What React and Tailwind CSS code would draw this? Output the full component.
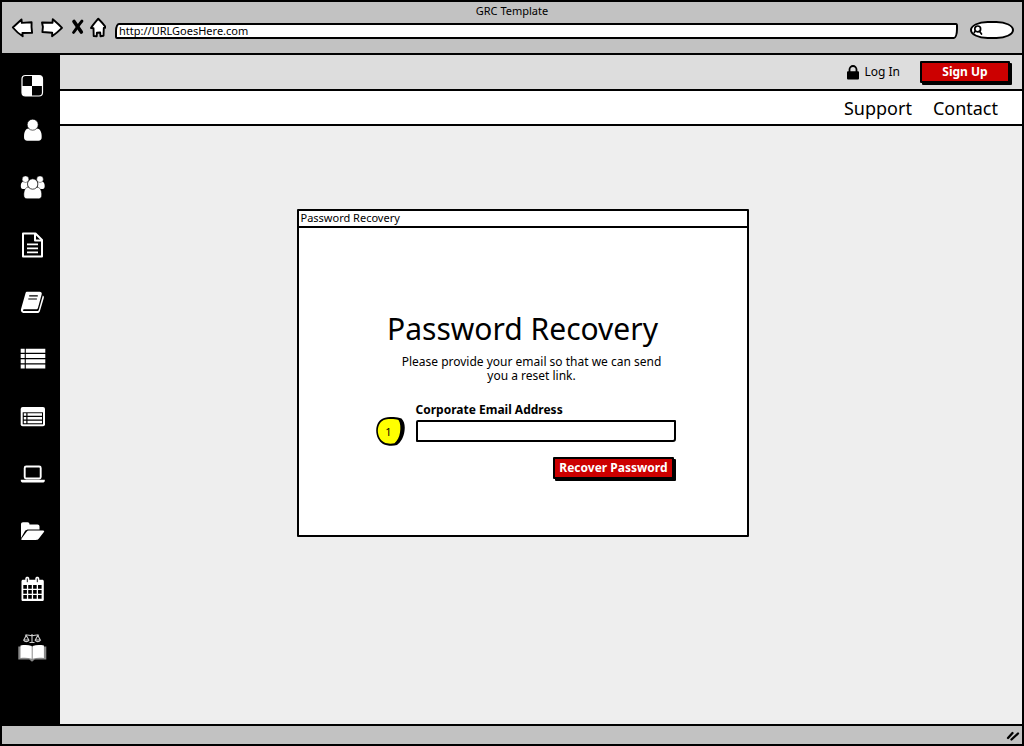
import React from "react";

function Icon({ children, label }) {
  return (
    <svg viewBox="0 0 32 32" className="h-8 w-8" role="img" aria-label={label} fill="white">
      {children}
    </svg>
  );
}

function CheckerIcon() {
  return (
    <Icon label="Dashboard">
      <rect x="6" y="5.500" width="20.500" height="20.500" rx="3.500" fill="black" stroke="white" strokeWidth="1.200" />
      <path d="M16 5.500h7a3.500 3.500 0 0 1 3.500 3.500v7H16zM6 16h10v10H9.500a3.500 3.500 0 0 1-3.500-3.500z" />
    </Icon>
  );
}

const menuIcons = [
  {
    label: "User",
    art: (
      <>
        <path d="M8 23c0-5.500 1.800-8.500 4.500-8.500h8.500c2.800 0 4.700 3 4.700 8.500 0 2.500-1.200 3.800-3.200 3.800H11.200C9.200 26.800 8 25.500 8 23z" />
        <circle cx="16.700" cy="10.700" r="5.500" stroke="black" strokeWidth="0.600" />
      </>
    ),
  },
  {
    label: "Group",
    art: (
      <>
        <path d="M4.800 14c0-3 1.200-4.500 3-4.500h4V17H6.800c-1.300 0-2-1-2-3zM28.700 14c0-3-1.200-4.500-3-4.500h-4V17h5c1.300 0 2-1 2-3z" />
        <circle cx="9.500" cy="7.200" r="3.300" stroke="black" strokeWidth="0.400" />
        <circle cx="24" cy="7.200" r="3.300" stroke="black" strokeWidth="0.400" />
        <path d="M7.800 23c0-5 1.800-7.800 4.500-7.800h8.700c2.800 0 4.700 2.800 4.700 7.800 0 2.500-1.200 3.700-3.200 3.700H11C9 26.700 7.800 25.500 7.800 23z" stroke="black" strokeWidth="0.500" />
        <circle cx="16.700" cy="12" r="5.200" stroke="black" strokeWidth="0.700" />
      </>
    ),
  },
  {
    label: "Document",
    art: (
      <g fill="none" stroke="white" strokeWidth="2" strokeLinejoin="round">
        <path d="M7 4.500h12.500l6.500 6.500v16.500H7z" />
        <path d="M19 5v6.500h7" />
        <path d="M11 15.300h11M11 19.300h11M11 23.300h11" strokeWidth="1.700" />
      </g>
    ),
  },
  {
    label: "Book",
    art: (
      <>
        <path d="M11.300 4.800h12.200c1.800 0 2.600 1 2.200 2.500L22 20.800c-.3 1-.9 1.500-2 1.500H8.300c-1.500 0-1.800 1.700-.5 1.700h13.500c.8 0 1.300-.4 1.500-1.200L26.800 8.500c1 .6 1.300 1.400 1 2.500L24 23.700c-.4 1.500-1.300 2.300-2.800 2.300H8c-2.500 0-3.700-2.300-2.800-4.500L9.500 6.200c.3-.9.900-1.400 1.800-1.400z" />
        <path d="M13.200 8.800h8.600M12.300 12h8.600" stroke="black" strokeWidth="1.200" />
      </>
    ),
  },
  {
    label: "List",
    art: (
      <path transform="translate(0 -1.5)" d="M4.700 6.300h4v4h-4zM9.800 6.300h19.500v4H9.800zM4.700 11.500h4v4h-4zM9.800 11.500h19.500v4H9.800zM4.700 16.700h4v4h-4zM9.800 16.700h19.500v4H9.800zM4.700 21.900h4v4h-4zM9.800 21.900h19.500v4H9.800z" />
    ),
  },
  {
    label: "Window list",
    art: (
      <g transform="translate(0 -1.5)">
        <rect x="4.700" y="6.500" width="24.300" height="19.300" rx="2" />
        <rect x="6.700" y="11.800" width="20.300" height="12" fill="black" />
        <path d="M7.800 12.800h2.500v2.500H7.800zM11.500 12.800h14.500v2.500H11.500zM7.800 16.500h2.500V19H7.800zM11.500 16.500h14.500V19H11.500zM7.800 20.200h2.500v2.500H7.800zM11.500 20.200h14.500v2.500H11.500z" />
      </g>
    ),
  },
  {
    label: "Laptop",
    art: (
      <g transform="translate(0 -1.2)">
        <rect x="8.700" y="8.700" width="16" height="12" rx="1.500" fill="none" stroke="white" strokeWidth="1.900" />
        <path d="M4.800 22h24v.9c0 1-.9 1.800-2.300 1.800H7.100c-1.400 0-2.300-.8-2.300-1.800z" />
      </g>
    ),
  },
  {
    label: "Folder",
    art: (
      <g transform="translate(0 -1)">
        <path d="M5 22V8.300C5 7 5.800 6.300 7 6.300h4.500c1.200 0 2 .7 2 2.200h8c1.200 0 2 .8 2 2V13.500H12.500c-1.500 0-2.500.5-3.500 1.500z" />
        <path d="M12.700 14.500H27c1.200 0 1.500.8.900 1.600l-5.200 6.600c-.6.8-1.500 1.200-2.700 1.200H6.300c-1 0-1.300-.7-.7-1.500l5-6.700c.6-.8 1.200-1.200 2.100-1.200z" />
      </g>
    ),
  },
  {
    label: "Calendar",
    art: (
      <g transform="translate(0 -1)">
        <path d="M5.500 8.300c0-1 .6-1.600 1.600-1.600h2.200V5.500c0-2.500 4-2.500 4 0v1.200h6V5.500c0-2.500 4-2.500 4 0v1.200h2.900c1 0 1.600.6 1.600 1.600v18.100c0 1-.6 1.600-1.600 1.600H7.100c-1 0-1.600-.6-1.600-1.600z" />
        <path d="M11.300 5.500v3.700M21.300 5.500v3.700" stroke="black" strokeWidth="0.900" />
        <path d="M7.300 12h3.600v3.700H7.300zM12.200 12h3.600v3.700h-3.600zM17.100 12h3.600v3.700h-3.600zM22 12h3.600v3.700H22zM7.300 17h3.600v3.700H7.300zM12.200 17h3.600v3.700h-3.600zM17.100 17h3.600v3.700h-3.600zM22 17h3.600v3.700H22zM7.300 22h3.600v3.700H7.300zM12.200 22h3.600v3.700h-3.600zM17.100 22h3.600v3.700h-3.600zM22 22h3.600v3.700H22z" fill="black" />
      </g>
    ),
  },
  {
    label: "Law book",
    art: (
      <>
        <g fill="none" stroke="#cccccc" strokeWidth="1.100">
          <path d="M9 3.300c3-1 4 .5 7 .3 3 .2 4-1.300 7-.3M16 2v8.500M13.500 10.500h5" />
          <path d="M10.200 3.500L7.800 8h5zM21.800 3.500L19.300 8h5zM7.800 8.500c1 1.500 4 1.500 5 0M19.300 8.500c1 1.500 4 1.500 5 0" />
        </g>
        <path d="M2.300 14.500h28v13H18.700l-2.700 2.300-2.700-2.300h-11z" fill="#8a8a8a" />
        <path d="M4.500 13.600c4-.8 8-.6 11.200.3v12.800c-3.500-1-7.500-1-11.200-.6zM27.900 13.600c-4-.8-8-.6-11.200.3v12.800c3.500-1 7.500-1 11.200-.6z" />
      </>
    ),
  },
];

function BrowserBar() {
  return (
    <header className="h-[53px] border-b-2 border-black bg-[#c2c2c2] pt-[3px]">
      <h1 className="text-center text-[11px] leading-3">GRC Template</h1>
      <div className="flex h-[22px] items-center pr-2 pl-[9px]">
        <nav aria-label="Browser" className="flex items-center">
          <button type="button" aria-label="Back" className="h-6 w-[27px]">
            <svg viewBox="0 0 27 24" className="h-6 w-[27px]" fill="white" stroke="black" strokeWidth="1.900" strokeLinejoin="round">
              <path d="M1.800 11.500L10.500 3.500l.3 3.400 9.800-.6c-.3 3.500 0 7.200.5 10.500l-9.700.2.300 3.300C8.200 18.200 4.800 15 1.800 11.500z" />
            </svg>
          </button>
          <button type="button" aria-label="Forward" className="h-6 w-[29px]">
            <svg viewBox="0 0 29 24" className="h-6 w-[29px]" fill="white" stroke="black" strokeWidth="1.900" strokeLinejoin="round">
              <path d="M24 11.900C21 8.500 18 6 14.800 3.200l-.3 3.500-10.500-.2.900 4.300-.5 5.200 9.800.7-.1 3.500c3.500-2.300 6.600-5 9.900-8.300z" />
            </svg>
          </button>
          <button type="button" aria-label="Stop" className="h-6 w-[21px]">
            <svg viewBox="0 0 21 24" className="h-6 w-[21px]" fill="none" stroke="black" strokeLinecap="round">
              <path d="M7 5.500l7.300 10.500" strokeWidth="3.600" />
              <path d="M15 5C12 8.500 9.500 12.500 6.500 16.500" strokeWidth="2.800" />
            </svg>
          </button>
          <button type="button" aria-label="Home" className="h-6 w-[18px]">
            <svg viewBox="0 0 18 24" className="h-6 w-[18px]" fill="white" stroke="black" strokeWidth="1.900" strokeLinejoin="round">
              <path d="M10.300 2.700C7.500 6 5 8.800 3 12l2.500.3.200 7.700 3 .2.200-3.500 3.300-.2.300 3.700 3-.4.300-7.800 2.100-.4c-2-3.300-4.800-6.200-7.600-8.900z" />
            </svg>
          </button>
        </nav>
        <input
          type="text"
          aria-label="Address"
          defaultValue="http://URLGoesHere.com"
          className="mt-[5px] ml-[9px] h-4 min-w-0 flex-1 rounded-[4px_2px_4px_2px/8px_3px_10px_2px] border-2 border-black bg-white px-[2px] text-[11px] leading-3 outline-none"
        />
        <label className="mt-1 ml-3 flex h-[18px] w-11 items-center rounded-[40%/50%] border-2 border-black bg-white pl-px">
          <svg viewBox="0 0 10 10" className="h-[10px] w-[10px] shrink-0" fill="none" stroke="black" strokeWidth="1.700" strokeLinecap="round">
            <circle cx="4.700" cy="3.900" r="2.900" />
            <path d="M2.200 6L1.300 7.500M6.500 6.300L8.500 9" />
          </svg>
          <input type="search" aria-label="Search" className="min-w-0 flex-1 bg-transparent text-[11px] leading-3 outline-none" />
        </label>
      </div>
    </header>
  );
}

function Sidebar() {
  return (
    <nav aria-label="Main" className="flex w-[58px] shrink-0 flex-col items-center bg-black pt-[15px] pl-[2px]">
      <a href="#dashboard">
        <CheckerIcon />
      </a>
      <ul className="mt-3 flex h-[550px] flex-col justify-between">
        {menuIcons.map(({ label, art }) => (
          <li key={label} className="h-8">
            <a href="#menu" className="block">
              <Icon label={label}>{art}</Icon>
            </a>
          </li>
        ))}
      </ul>
    </nav>
  );
}

function RecoveryPanel() {
  return (
    <section className="w-[452px] rounded-[1px] border-2 border-black bg-white pb-14">
      <div className="h-[17px] border-b-2 border-black px-[2px] text-[11px] leading-[14px]">Password Recovery</div>
      <h2 className="mt-[81px] text-center text-[30px] leading-10">Password Recovery</h2>
      <p className="mx-auto mt-[6px] w-[288px] pl-[18px] text-center text-[12px] leading-[14px]">
        Please provide your email so that we can send you a reset link.
      </p>
      <form className="mt-5 grid grid-cols-[29px_260px] gap-x-[11px] pl-[77px]">
        <label htmlFor="email" className="col-start-2 text-[12px] leading-[14px] font-bold">
          Corporate Email Address
        </label>
        <div className="relative col-start-1 flex h-[29px] w-[29px] items-center justify-center">
          <svg viewBox="0 0 29 29" className="absolute inset-0 h-[29px] w-[29px]">
            <path d="M9 .8C14-.6 21-.2 25.500 1.500c3 3 3.700 7.500 3 12.500-.7 6-3.500 11-7.500 14-4 1.300-10 1-14-1C2.500 24 .3 19 .2 13.500.5 7 3 2.500 9 .8z" fill="black" />
            <path d="M9.500 2.500c4.500-.8 9.500-.6 13 .5 2 3 2.300 8 1.500 12.500-.7 4.500-2.500 8-5.500 10.700-3.500.8-7.500.6-10.500-1C4 23 2 18.500 1.800 13.700 2 8 4.500 3.800 9.500 2.500z" fill="#ffff00" />
          </svg>
          <span className="relative pr-[3px] text-[11px] leading-4">1</span>
        </div>
        <input
          id="email"
          type="email"
          className="mt-[3px] h-[22px] w-full rounded-[2px_1px_3px_1px] border-2 border-black bg-white px-1 text-[12px] outline-none"
        />
        <button
          type="button"
          className="col-start-2 mt-[11px] mr-[2px] h-[22px] justify-self-end rounded-[1px] border-2 border-black bg-[#cc0000] px-1 text-[12px] leading-4 font-bold text-white shadow-[2px_2px_0_black]"
        >
          Recover Password
        </button>
      </form>
    </section>
  );
}

export default function App() {
  return (
    <div className="flex min-h-screen flex-col border-2 border-black bg-[#eeeeee] font-['Noto_Sans',sans-serif] text-black">
      <BrowserBar />
      <div className="flex flex-1">
        <Sidebar />
        <div className="flex min-w-0 flex-1 flex-col">
          <div className="flex h-9 items-center justify-end border-b-2 border-black bg-[#dddddd] pr-3">
            <a href="#login" className="flex items-center text-[12px] leading-4">
              <svg viewBox="0 0 12 15" className="mr-[5px] h-[15px] w-3">
                <rect x="0" y="6.300" width="12" height="8.200" rx="1" />
                <path d="M2.500 7V4.500a3.500 3.500 0 0 1 7 0V7" fill="none" stroke="black" strokeWidth="1.800" />
              </svg>
              Log In
            </a>
            <button
              type="button"
              className="ml-5 h-[22px] w-[90px] rounded-[1px] border-2 border-black bg-[#cc0000] text-[12px] leading-4 font-bold text-white shadow-[2px_2px_0_black]"
            >
              Sign Up
            </button>
          </div>
          <nav aria-label="Help" className="flex h-[35px] items-center justify-end gap-[21px] border-b-2 border-black bg-white pr-6 text-[18px] leading-6">
            <a href="#support">Support</a>
            <a href="#contact">Contact</a>
          </nav>
          <main className="flex flex-1 items-start justify-center pt-[83px] pr-[37px]">
            <RecoveryPanel />
          </main>
        </div>
      </div>
      <footer className="flex h-5 items-center justify-end border-t-2 border-black bg-[#c2c2c2] pr-[2px]">
        <svg viewBox="0 0 14 12" className="h-3 w-[14px]" fill="none" stroke="black" strokeLinecap="round" strokeWidth="2.300">
          <path d="M2 9L6.500 4M5.500 10.500L12 4.500" />
        </svg>
      </footer>
    </div>
  );
}
